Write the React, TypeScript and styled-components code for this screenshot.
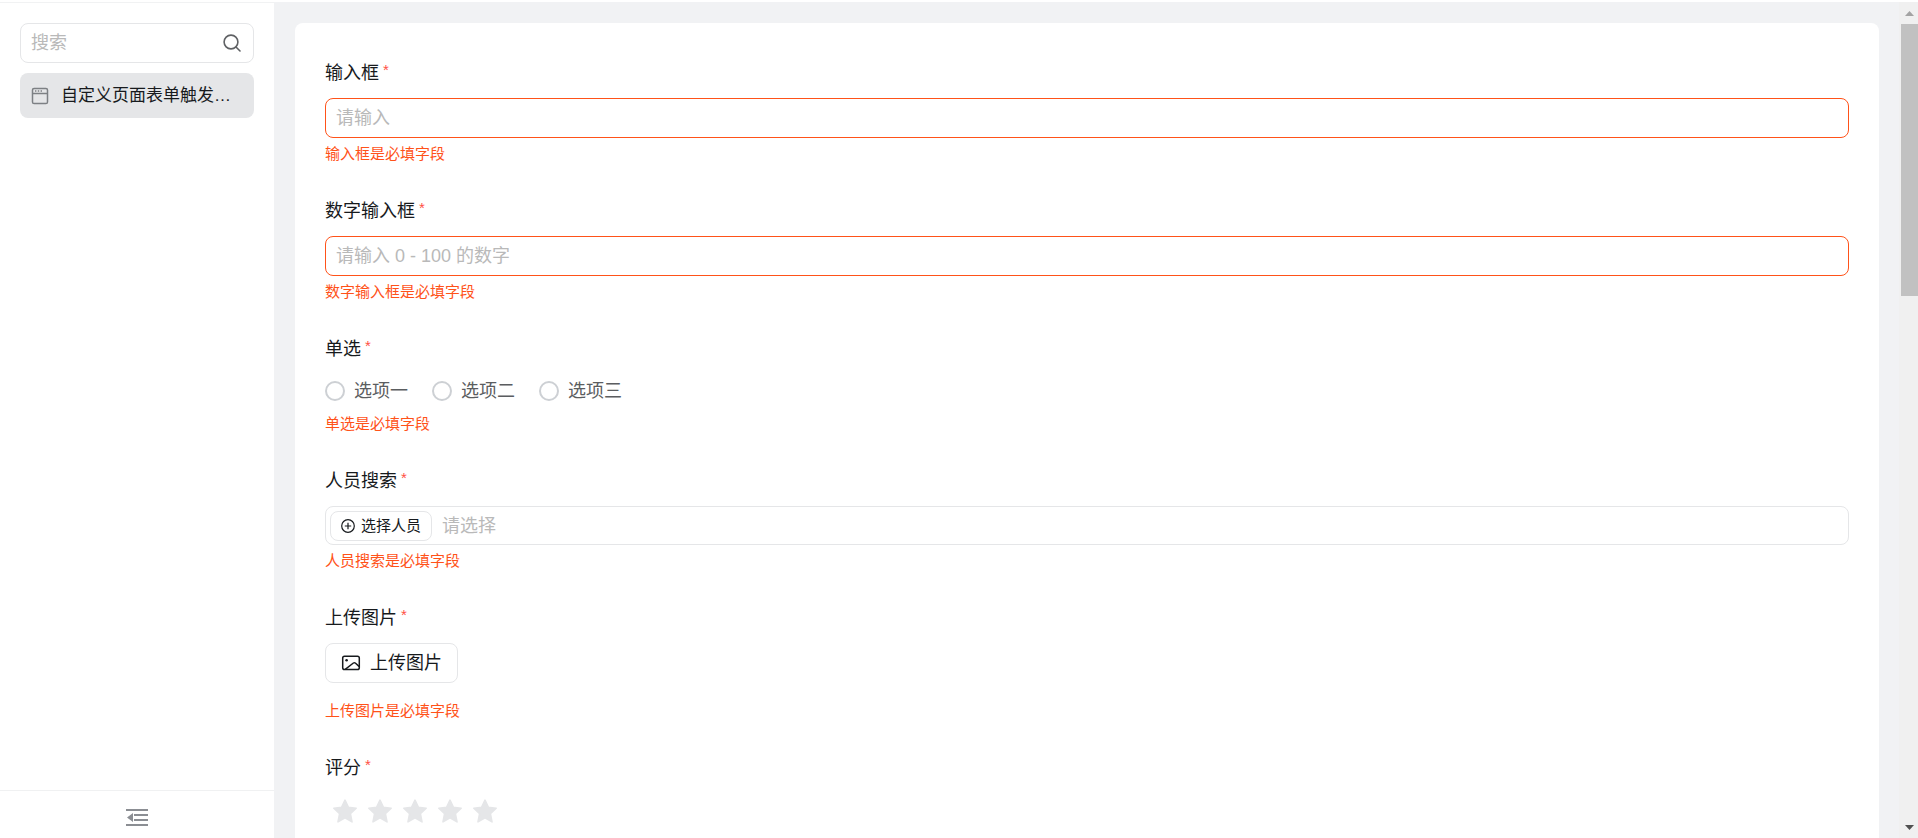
import React from "react";
import styled, { createGlobalStyle } from "styled-components";

const GlobalStyle = createGlobalStyle`
  *, *::before, *::after { box-sizing: border-box; }
  body {
    margin: 0;
    background: #ffffff;
    color: #171a1d;
    font-family: "Liberation Sans", "Noto Sans CJK SC", sans-serif;
    font-size: 18px;
    font-weight: 400;
    line-height: 26px;
  }
  button, input { font: inherit; color: inherit; }
  input::placeholder { color: #b9b9b9; opacity: 1; }
`;

const Page = styled.div`
  display: flex;
  height: 100vh;
  padding-top: 2px;
  overflow: hidden;
`;

const Sidebar = styled.aside`
  display: flex;
  flex-direction: column;
  flex: none;
  width: 274px;
  border-top: 1px solid #f1f2f3;
`;

const SidebarBody = styled.div`
  display: flex;
  flex: 1;
  flex-direction: column;
  gap: 10px;
  padding: 20px 20px 0;
`;

const SearchBox = styled.label`
  display: flex;
  align-items: center;
  height: 40px;
  padding: 0 12px 0 10px;
  border: 1px solid #e5e6e8;
  border-radius: 8px;
`;

const PlainInput = styled.input`
  flex: 1;
  min-width: 0;
  padding: 0;
  border: 0;
  outline: 0;
  background: transparent;
`;

const NavItem = styled.a`
  display: flex;
  align-items: center;
  gap: 12px;
  height: 45px;
  padding: 0 0 0 11px;
  border-radius: 8px;
  background: #e5e6e8;
  color: #171a1d;
  font-size: 17px;
  text-decoration: none;
  white-space: nowrap;
`;

const CollapseButton = styled.button`
  display: flex;
  align-items: center;
  justify-content: center;
  height: 48px;
  padding: 6px 0 0;
  border: 0;
  border-top: 1px solid #f0f1f2;
  background: #ffffff;
`;

const Main = styled.main`
  flex: 1;
  min-width: 0;
  padding: 21px 20px 0 21px;
  overflow: hidden;
  background: #f1f2f4;
`;

const FormCard = styled.form`
  display: flex;
  flex-direction: column;
  gap: 33px;
  min-height: 100%;
  padding: 37px 30px;
  border-radius: 8px;
  background: #ffffff;
`;

const Field = styled.fieldset`
  display: flex;
  flex-direction: column;
  min-width: 0;
  margin: 0;
  padding: 0;
  border: 0;
`;

const FieldLabel = styled.label`
  display: flex;
  gap: 4px;
  margin-bottom: 12px;
`;

const Required = styled.span`
  color: #ff5043;
  font-size: 15px;
  line-height: 20px;
`;

const TextInput = styled.input`
  width: 100%;
  height: 40px;
  padding: 0 10px;
  border: 1px solid #ff5219;
  border-radius: 8px;
  outline: 0;
  background: #ffffff;
`;

const ErrorText = styled.p<{ $spaced?: boolean }>`
  margin: ${(p) => (p.$spaced ? 17 : 5)}px 0 0;
  color: #ff5219;
  font-size: 15px;
  line-height: 22px;
`;

const RadioRow = styled.div`
  display: flex;
  align-items: center;
  gap: 24px;
  height: 34px;
`;

const RadioOption = styled.label`
  display: flex;
  align-items: center;
  gap: 9px;
  color: #5b5d60;
`;

const Radio = styled.input`
  width: 20px;
  height: 20px;
  margin: 0;
  appearance: none;
  border: 2px solid #cdd0d4;
  border-radius: 50%;
  background: #ffffff;
  &:checked { border: 6px solid #1677ff; }
`;

const PersonBox = styled.div`
  display: flex;
  align-items: center;
  gap: 10px;
  height: 39px;
  padding: 0 4px;
  border: 1px solid #e5e6e8;
  border-radius: 8px;
`;

const OutlineButton = styled.button<{ $small?: boolean }>`
  display: flex;
  align-items: center;
  align-self: ${(p) => (p.$small ? "center" : "flex-start")};
  gap: ${(p) => (p.$small ? 6 : 9)}px;
  height: ${(p) => (p.$small ? 30 : 40)}px;
  padding: 0 ${(p) => (p.$small ? 10 : 15)}px;
  border: 1px solid #e5e6e8;
  border-radius: 8px;
  background: #ffffff;
  font-size: ${(p) => (p.$small ? 15 : 18)}px;
`;

const Stars = styled.div`
  display: flex;
  align-items: center;
  gap: 9px;
  height: 36px;
  padding-left: 7px;
`;

const StarButton = styled.button`
  display: flex;
  padding: 0;
  border: 0;
  background: transparent;
`;

const ScrollTrack = styled.div`
  display: flex;
  flex: none;
  flex-direction: column;
  align-items: flex-end;
  width: 19px;
  background: #f0f0f0;
`;

const ScrollArrow = styled.div`
  display: flex;
  flex: none;
  align-items: center;
  justify-content: center;
  width: 17px;
  height: 22px;
`;

const ScrollRail = styled.div`
  flex: 1;
  width: 17px;
`;

const ScrollThumb = styled.div`
  height: 34.3%;
  background: #c1c1c1;
`;

const SearchIcon = () => (
  <svg width="18" height="18" viewBox="0 0 18 18" fill="none" stroke="#5f6164" strokeWidth="1.6" strokeLinecap="round">
    <circle cx="8" cy="8" r="6.9" />
    <path d="M13 13l4 4" />
  </svg>
);

const WindowIcon = () => (
  <svg width="18" height="18" viewBox="0 0 18 18" fill="none" stroke="#7d8084" strokeWidth="1.5">
    <rect x="1.500" y="1.500" width="15" height="15" rx="1.6" />
    <path d="M1.500 6.500h15" />
    <path d="M4 4h1.400M6.800 4h1.400M9.600 4h1.400" strokeWidth="1.400" />
  </svg>
);

const CollapseIcon = () => (
  <svg width="22" height="19" viewBox="0 0 22 19" fill="#8b8e93">
    <path d="M0 1h22v2H0zM8 6h14v2H8zM8 11h14v2H8zM0 16h22v2H0zM7 5v9L1 9.5z" />
  </svg>
);

const PlusCircleIcon = () => (
  <svg width="14" height="14" viewBox="0 0 14 14" fill="none" stroke="#171a1d" strokeWidth="1.2">
    <circle cx="7" cy="7" r="6.3" />
    <path d="M7 3.8v6.4M3.8 7h6.4" />
  </svg>
);

const PictureIcon = () => (
  <svg width="20" height="16" viewBox="0 0 20 16" fill="none" stroke="#171a1d" strokeWidth="1.5">
    <rect x="1.7" y="1.2" width="16.6" height="13.4" rx="1.8" />
    <path d="M4.2 14.4l8.200-6.400q1-.7 1.900 0l4 3.600" />
    <circle cx="5.6" cy="5.2" r="1.3" fill="#171a1d" stroke="none" />
  </svg>
);

const StarIcon = () => (
  <svg width="26" height="26" viewBox="0 0 26 26" fill="#e5e6e8" stroke="#e5e6e8" strokeWidth="1.6" strokeLinejoin="round">
    <path d="M13 2.2l3.3 7 7.9 1-5.8 5.4 1.6 8.3-7-4-7 4 1.6-8.3L1.8 10.2l7.9-1z" />
  </svg>
);

const Label = ({ text, htmlFor }: { text: string; htmlFor?: string }) => (
  <FieldLabel as={htmlFor ? "label" : "div"} htmlFor={htmlFor}>
    {text}
    <Required>*</Required>
  </FieldLabel>
);

const options = ["选项一", "选项二", "选项三"];

export default function App() {
  return (
    <>
      <GlobalStyle />
      <Page>
        <Sidebar>
          <SidebarBody>
            <SearchBox>
              <PlainInput type="text" placeholder="搜索" aria-label="搜索" />
              <SearchIcon />
            </SearchBox>
            <NavItem href="#form">
              <WindowIcon />
              自定义页面表单触发…
            </NavItem>
          </SidebarBody>
          <CollapseButton type="button" aria-label="收起">
            <CollapseIcon />
          </CollapseButton>
        </Sidebar>
        <Main>
          <FormCard id="form">
            <Field>
              <Label text="输入框" htmlFor="text" />
              <TextInput id="text" placeholder="请输入" />
              <ErrorText>输入框是必填字段</ErrorText>
            </Field>
            <Field>
              <Label text="数字输入框" htmlFor="number" />
              <TextInput id="number" inputMode="numeric" placeholder="请输入 0 - 100 的数字" />
              <ErrorText>数字输入框是必填字段</ErrorText>
            </Field>
            <Field>
              <Label text="单选" />
              <RadioRow>
                {options.map((option) => (
                  <RadioOption key={option}>
                    <Radio type="radio" name="choice" value={option} />
                    {option}
                  </RadioOption>
                ))}
              </RadioRow>
              <ErrorText>单选是必填字段</ErrorText>
            </Field>
            <Field>
              <Label text="人员搜索" htmlFor="person" />
              <PersonBox>
                <OutlineButton type="button" $small>
                  <PlusCircleIcon />
                  选择人员
                </OutlineButton>
                <PlainInput id="person" placeholder="请选择" />
              </PersonBox>
              <ErrorText>人员搜索是必填字段</ErrorText>
            </Field>
            <Field>
              <Label text="上传图片" />
              <OutlineButton type="button">
                <PictureIcon />
                上传图片
              </OutlineButton>
              <ErrorText $spaced>上传图片是必填字段</ErrorText>
            </Field>
            <Field>
              <Label text="评分" />
              <Stars>
                {[1, 2, 3, 4, 5].map((n) => (
                  <StarButton key={n} type="button" aria-label={`${n}`}>
                    <StarIcon />
                  </StarButton>
                ))}
              </Stars>
            </Field>
          </FormCard>
        </Main>
        <ScrollTrack aria-hidden="true">
          <ScrollArrow>
            <svg width="9" height="5" viewBox="0 0 9 5" fill="#a3a3a3"><path d="M0 5L4.500 0L9 5z" /></svg>
          </ScrollArrow>
          <ScrollRail>
            <ScrollThumb />
          </ScrollRail>
          <ScrollArrow>
            <svg width="9" height="5" viewBox="0 0 9 5" fill="#505050"><path d="M0 0h9L4.500 5z" /></svg>
          </ScrollArrow>
        </ScrollTrack>
      </Page>
    </>
  );
}
